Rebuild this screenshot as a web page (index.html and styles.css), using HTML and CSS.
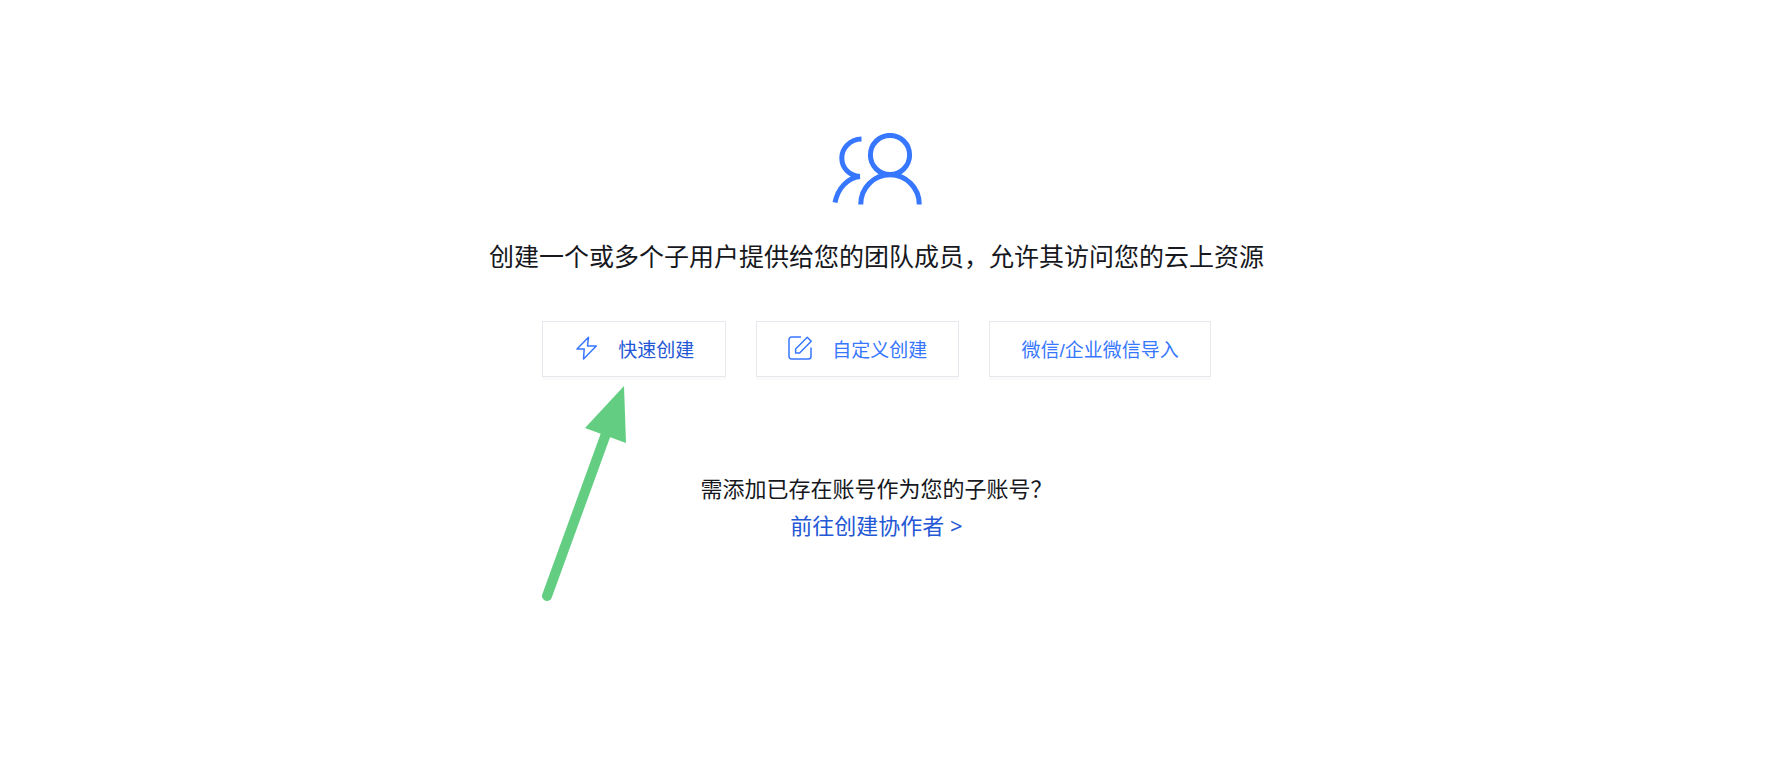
FILE: index.html
```html
<!DOCTYPE html>
<html lang="zh-CN">
<head>
  <meta charset="UTF-8" />
  <meta name="viewport" content="width=device-width, initial-scale=1" />
  <title>新建子用户</title>
  <link rel="stylesheet" href="styles.css">
</head>
<body>
  <main class="create-user">
    <svg class="users-icon" viewBox="0 0 90 72" aria-hidden="true">
      <circle cx="58" cy="22" r="19.600" />
      <path d="M28.800 71.500V71a29.200 29.200 0 0 1 58.400 0v.5" />
      <path d="M29.500 6C18.500 6.200 9.800 14.700 9.800 25C9.800 35 17.500 43 28 43.600" />
      <path d="M28 43.600C15.500 45 6 55 3 69.500" />
    </svg>

    <h1 class="title">创建一个或多个子用户提供给您的团队成员，允许其访问您的云上资源</h1>

    <div class="actions">
      <div class="action-item">
        <button type="button" class="action action-quick">
          <svg class="action-icon" viewBox="0 0 24 24" aria-hidden="true">
            <path d="M14.500 1.200L3 13h7.200L9.500 23L22.300 10H13.500z" />
          </svg>
          <span>快速创建</span>
        </button>
        <!-- 指引箭头 -->
        <svg class="guide-arrow" viewBox="0 0 90 220" aria-hidden="true">
          <path class="arrow-line" d="M5 211L65 46" />
          <path class="arrow-head" d="M82 1L43 43L84 58z" />
        </svg>
      </div>
      <button type="button" class="action">
        <svg class="action-icon" viewBox="0 0 24 24" aria-hidden="true">
          <path d="M13 1H3.500A2.500 2.500 0 0 0 1 3.500v17A2.500 2.500 0 0 0 3.500 23h17a2.500 2.500 0 0 0 2.500-2.500V11.500" />
          <path d="M19.300 1.300L7.600 13v4h4L23.200 5.200z" />
        </svg>
        <span>自定义创建</span>
      </button>
      <button type="button" class="action">微信/企业微信导入</button>
    </div>

    <div class="collaborator">
      <p>需添加已存在账号作为您的子账号？</p>
      <a href="#">前往创建协作者 &gt;</a>
    </div>
  </main>
</body>
</html>
```

FILE: styles.css
```css
body {
  margin: 0;
  background: #fff;
  color: #16181d;
  font-family: "Noto Sans", "Noto Sans CJK SC", sans-serif;
}
.create-user {
  display: flex;
  flex-direction: column;
  align-items: center;
  box-sizing: border-box;
  min-height: 100vh;
  padding: 133px 26px 40px 0;
}
.users-icon {
  width: 90px;
  height: 72px;
  fill: none;
  stroke: #3777ff;
  stroke-width: 5;
}
.title {
  margin: 32px 0 0;
  font-size: 25px;
  font-weight: 400;
  line-height: 38px;
}
.actions {
  display: flex;
  flex-wrap: wrap;
  gap: 30px;
  margin-top: 46px;
}
.action-item {
  position: relative;
}
.action {
  display: flex;
  align-items: center;
  gap: 20px;
  height: 56px;
  padding: 0 31px 2px;
  border: 1px solid #e5e8ed;
  background: #fff;
  box-shadow: 0 3px 0 #fafafb;
  color: #3777ff;
  font-family: "Liberation Sans", "Noto Sans CJK SC", sans-serif;
  font-size: 19px;
  cursor: pointer;
}
.action-quick {
  color: #2457d6;
}
.action-icon {
  width: 24px;
  height: 24px;
  fill: none;
  stroke: #3777ff;
  stroke-width: 1.5;
  stroke-linejoin: round;
}
.guide-arrow {
  position: absolute;
  top: 64px;
  left: 0;
  width: 90px;
  height: 220px;
  pointer-events: none;
}
.arrow-line {
  fill: none;
  stroke: #63ce82;
  stroke-width: 10;
  stroke-linecap: round;
}
.arrow-head {
  fill: #63ce82;
}
.collaborator {
  margin-top: 93px;
  font-size: 22px;
  line-height: 37px;
  text-align: center;
}
.collaborator p {
  margin: 0;
}
.collaborator a {
  color: #2457d6;
  text-decoration: none;
}
```
